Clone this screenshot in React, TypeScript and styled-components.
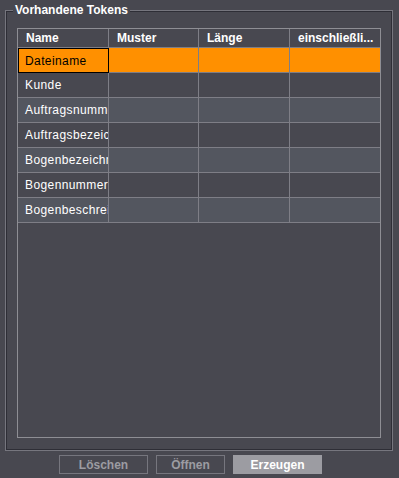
import React from "react";
import styled, { createGlobalStyle } from "styled-components";

const Global = createGlobalStyle`
  html, body { margin: 0; padding: 0; background: #484850; }
  body { font-family: "Liberation Sans", Arial, sans-serif; font-size: 12px; color: #fff; }
  #root { width: 399px; height: 478px; }
`;

const Page = styled.div`
  width: 399px;
  height: 478px;
  background: #484850;
  padding-top: 10px;
  box-sizing: border-box;
`;

const Panel = styled.div`
  position: relative;
  margin-left: 5px;
  width: 388px;
  height: 441px;
  box-sizing: border-box;
  border: 1px solid #76767e;
  box-shadow: inset 1px 1px 0 #2e2e36, inset -1px -1px 0 #2e2e36;
  padding: 17px 0 0 11px;
`;

const Title = styled.span`
  position: absolute;
  top: -8px;
  left: 7px;
  padding: 0 2px;
  background: #484850;
  font-weight: bold;
  font-size: 12px;
  line-height: 14px;
  color: #fff;
`;

const Table = styled.div`
  width: 364px;
  height: 410px;
  box-sizing: border-box;
  border: 1px solid #8e8e94;
  background: #484850;
  display: flex;
  flex-direction: column;
`;

const Row = styled.div<{ $alt?: boolean; $header?: boolean; $sel?: boolean }>`
  display: grid;
  grid-template-columns: 91px 90px 91px 90px;
  height: ${(p) => (p.$header ? 19 : 25)}px;
  box-sizing: border-box;
  border-bottom: 1px solid #7e7e86;
  background: ${(p) => (p.$sel ? "#ff9000" : p.$alt ? "#53565f" : "#484850")};
  flex: none;
`;

const Cell = styled.div<{ $header?: boolean; $sel?: boolean; $focus?: boolean; $last?: boolean }>`
  box-sizing: border-box;
  border-right: ${(p) => (p.$last ? "none" : "1px solid #7e7e86")};
  ${(p) => (p.$focus ? "border: 1px solid #000; margin-bottom: -1px;" : "")}
  padding-left: ${(p) => (p.$header ? 8 : p.$focus ? 6 : 7)}px;
  display: flex;
  align-items: center;
  overflow: hidden;
  white-space: nowrap;
  font-weight: ${(p) => (p.$header ? "bold" : "normal")};
  font-size: 12px;
  color: ${(p) => (p.$sel ? "#000" : "#fff")};
  letter-spacing: ${(p) => (p.$header ? 0 : 0.4)}px;
`;

const Buttons = styled.div`
  display: flex;
  gap: 8px;
  padding: 4px 0 0 59px;
`;

const Button = styled.div<{ $primary?: boolean; $w: number }>`
  width: ${(p) => p.$w}px;
  height: 19px;
  box-sizing: border-box;
  display: flex;
  align-items: center;
  justify-content: center;
  font-weight: bold;
  font-size: 12px;
  border: 1px solid ${(p) => (p.$primary ? "#9c9ca2" : "#76767e")};
  background: ${(p) => (p.$primary ? "#9c9ca2" : "transparent")};
  color: ${(p) => (p.$primary ? "#fff" : "#9c9ca2")};
`;

const headers = ["Name", "Muster", "Länge", "einschließli..."];
const names = [
  "Dateiname",
  "Kunde",
  "Auftragsnummer",
  "Auftragsbezeichnung",
  "Bogenbezeichnung",
  "Bogennummer",
  "Bogenbeschreibung",
];

export default function App() {
  return (
    <>
      <Global />
      <Page>
        <Panel>
          <Title>Vorhandene Tokens</Title>
          <Table>
            <Row $header>
              {headers.map((h, i) => (
                <Cell key={h} $header $last={i === 3}>
                  {h}
                </Cell>
              ))}
            </Row>
            {names.map((n, r) => (
              <Row key={n} $alt={r % 2 === 0 && r > 0} $sel={r === 0}>
                <Cell $sel={r === 0} $focus={r === 0}>
                  {n}
                </Cell>
                <Cell $sel={r === 0} />
                <Cell $sel={r === 0} />
                <Cell $sel={r === 0} $last />
              </Row>
            ))}
          </Table>
        </Panel>
        <Buttons>
          <Button $w={89}>Löschen</Button>
          <Button $w={69}>Öffnen</Button>
          <Button $w={89} $primary>
            Erzeugen
          </Button>
        </Buttons>
      </Page>
    </>
  );
}
